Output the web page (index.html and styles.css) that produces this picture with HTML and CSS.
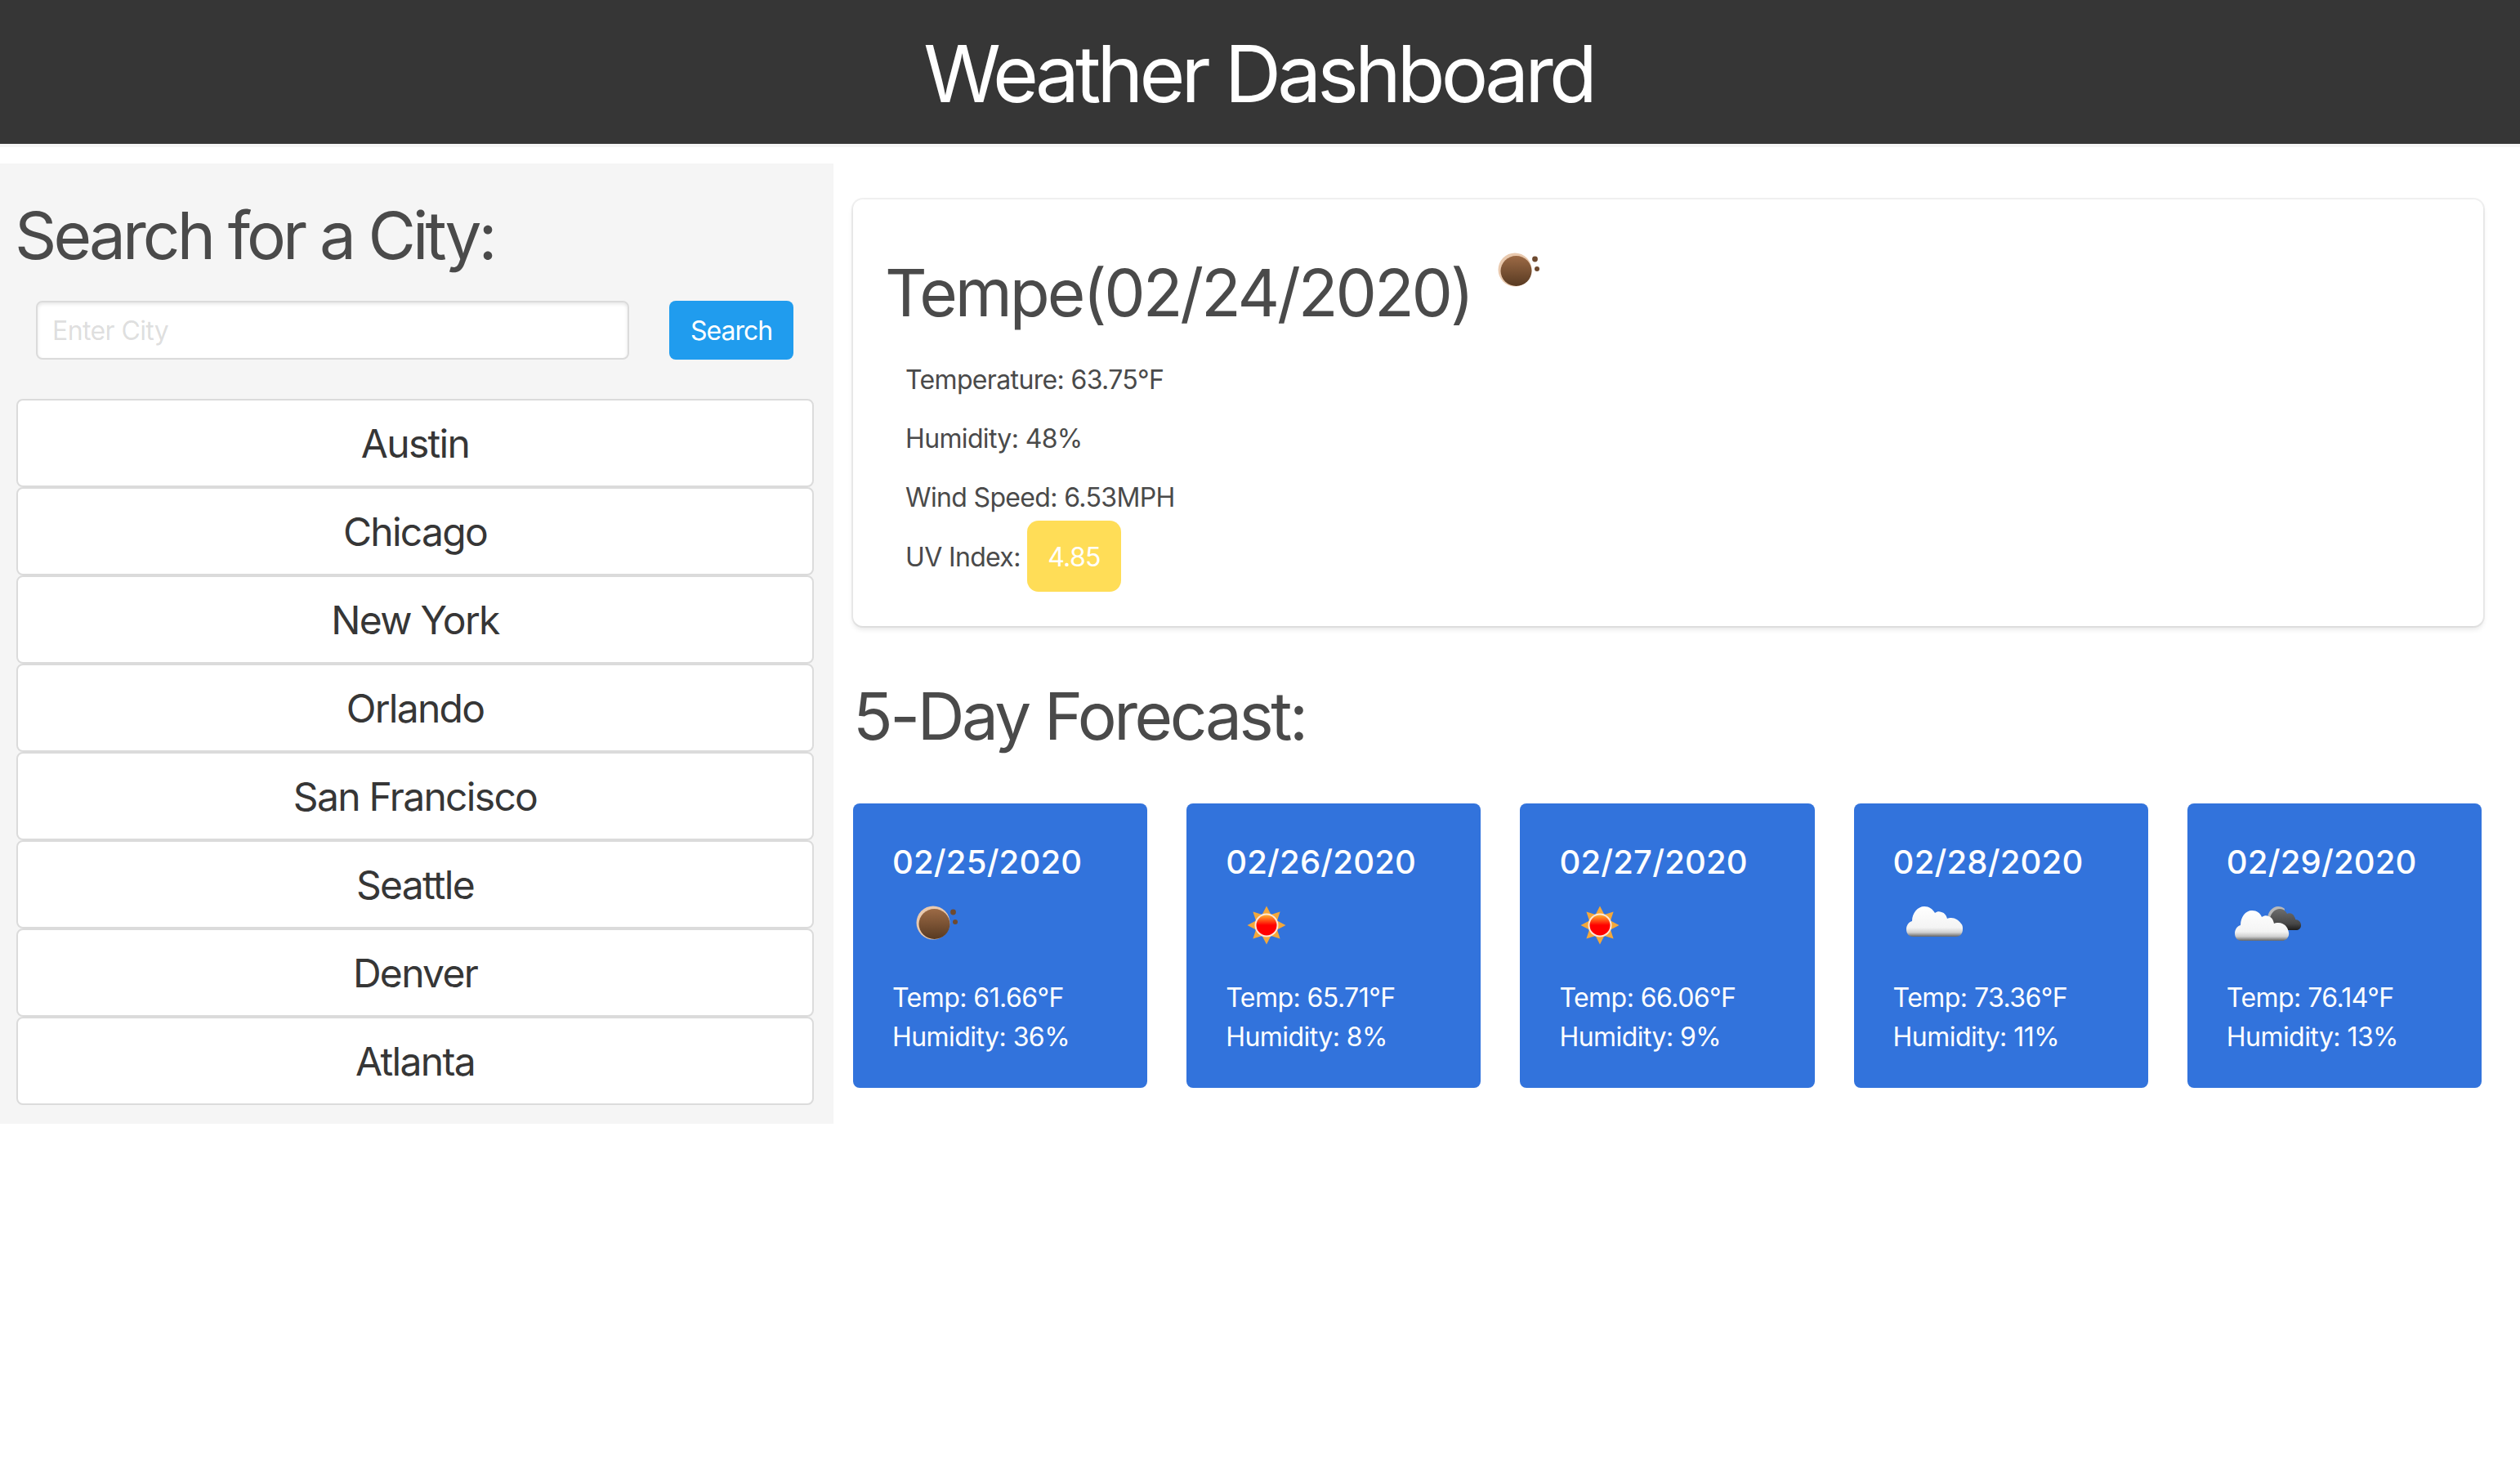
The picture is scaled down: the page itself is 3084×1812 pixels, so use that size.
FILE: index.html
```html
<!DOCTYPE html>
<html lang="en">
<head>
<meta charset="UTF-8" />
<meta name="viewport" content="width=device-width, initial-scale=1" />
<title>Weather Dashboard</title>
<link rel="stylesheet" href="styles.css">
</head>
<body>

<svg class="icon-defs" width="0" height="0" aria-hidden="true">
  <defs>
    <linearGradient id="moonFill" x1="0" y1="0" x2="0" y2="1">
      <stop offset="0" stop-color="#9c6a45" />
      <stop offset="1" stop-color="#583a22" />
    </linearGradient>
    <linearGradient id="sunFill" x1="0" y1="0" x2="0" y2="1">
      <stop offset="0" stop-color="#ffb030" />
      <stop offset="0.5" stop-color="#ff0000" />
      <stop offset="1" stop-color="#ff0000" />
    </linearGradient>
    <linearGradient id="cloudFill" x1="0" y1="0" x2="0" y2="1">
      <stop offset="0" stop-color="#ffffff" />
      <stop offset="0.7" stop-color="#f4f4f4" />
      <stop offset="0.86" stop-color="#d0d0d0" />
      <stop offset="1" stop-color="#666666" />
    </linearGradient>
    <linearGradient id="darkCloudFill" x1="0" y1="0" x2="0" y2="1">
      <stop offset="0" stop-color="#6e6e6e" />
      <stop offset="0.7" stop-color="#474747" />
      <stop offset="1" stop-color="#1c1c1c" />
    </linearGradient>

    <symbol id="icon-moon" viewBox="0 0 100 100">
      <circle cx="50" cy="50" r="20.5" fill="#e9c9ae" />
      <ellipse cx="51.5" cy="51.5" rx="19" ry="18.5" fill="url(#moonFill)" />
      <circle cx="74.5" cy="37" r="3.4" fill="#6e4a30" />
      <circle cx="77" cy="49" r="3" fill="#6e4a30" />
    </symbol>

    <symbol id="icon-sun" viewBox="0 0 100 100">
      <polygon fill="#f4a83a" points="50,29.5 55.4,40 66.6,36.4 63,47.6 73.5,53 63,58.4 66.6,69.6 55.4,66 50,76.5 44.6,66 33.4,69.6 37,58.4 26.5,53 37,47.6 33.4,36.4 44.6,40" />
      <circle cx="50" cy="53" r="14.5" fill="#ffe9d8" />
      <circle cx="50" cy="53" r="12.5" fill="url(#sunFill)" />
    </symbol>

    <symbol id="icon-cloud" viewBox="0 0 100 100">
      <path fill="url(#cloudFill)" d="M24 67c-5 0-8-4-8-9 0-5 3-9 7-10 0-10 7-18 15-18 6 0 10 3 13 8 3-2 5-2 8-1 4 1 6 4 7 8 1-1 3-1 5-1 5 0 9 3 12 7 2 2 2 4 2 7 0 5-3 9-8 9z" />
    </symbol>

    <symbol id="icon-clouds" viewBox="0 0 100 100">
      <path fill="#b9b9b9" d="M50 45c0-8 6-15 13-15 3 0 6 1 8 3l-6 22z" />
      <path fill="url(#darkCloudFill)" d="M56 59c-3-4-4-9-3-14 1-7 6-12 12-12 4 0 7 2 9 6 3-2 8 0 9 4 1 1 1 2 1 3 4 0 7 3 7 7 0 4-3 6-6 6z" />
      <path fill="url(#cloudFill)" d="M18 72c-5 0-8-4-8-9 0-5 3-9 7-10 0-10 6-18 14-18 6 0 10 3 12 8 3-2 6-2 8-1 4 1 6 4 7 9 1-1 3-1 5-1 7 0 12 5 13 12 1 5-3 10-8 10z" />
    </symbol>
  </defs>
</svg>

<header class="top-bar">
  <h1 class="top-title">Weather Dashboard</h1>
</header>

<main class="dashboard">
  <aside class="search-panel">
    <h2 class="panel-title">Search for a City:</h2>
    <form class="search-form">
      <input class="search-input" type="text" placeholder="Enter City" />
      <button class="search-button" type="button">Search</button>
    </form>
    <div class="city-list">
      <button class="city-button" type="button">Austin</button>
      <button class="city-button" type="button">Chicago</button>
      <button class="city-button" type="button">New York</button>
      <button class="city-button" type="button">Orlando</button>
      <button class="city-button" type="button">San Francisco</button>
      <button class="city-button" type="button">Seattle</button>
      <button class="city-button" type="button">Denver</button>
      <button class="city-button" type="button">Atlanta</button>
    </div>
  </aside>

  <section class="weather-column">
    <div class="current-box">
      <div class="current-head">
        <h2 class="current-title">Tempe(02/24/2020)</h2>
        <svg class="weather-icon"><use href="#icon-moon" /></svg>
      </div>
      <p class="current-line">Temperature: 63.75°F</p>
      <p class="current-line">Humidity: 48%</p>
      <p class="current-line">Wind Speed: 6.53MPH</p>
      <p class="current-line">UV Index: <span class="uv-badge">4.85</span></p>
    </div>

    <h2 class="forecast-title">5-Day Forecast:</h2>

    <div class="forecast-row">
      <div class="forecast-card">
        <h3 class="forecast-date">02/25/2020</h3>
        <svg class="weather-icon"><use href="#icon-moon" /></svg>
        <p class="forecast-text">Temp: 61.66°F</p>
        <p class="forecast-text">Humidity: 36%</p>
      </div>
      <div class="forecast-card">
        <h3 class="forecast-date">02/26/2020</h3>
        <svg class="weather-icon"><use href="#icon-sun" /></svg>
        <p class="forecast-text">Temp: 65.71°F</p>
        <p class="forecast-text">Humidity: 8%</p>
      </div>
      <div class="forecast-card">
        <h3 class="forecast-date">02/27/2020</h3>
        <svg class="weather-icon"><use href="#icon-sun" /></svg>
        <p class="forecast-text">Temp: 66.06°F</p>
        <p class="forecast-text">Humidity: 9%</p>
      </div>
      <div class="forecast-card">
        <h3 class="forecast-date">02/28/2020</h3>
        <svg class="weather-icon"><use href="#icon-cloud" /></svg>
        <p class="forecast-text">Temp: 73.36°F</p>
        <p class="forecast-text">Humidity: 11%</p>
      </div>
      <div class="forecast-card">
        <h3 class="forecast-date">02/29/2020</h3>
        <svg class="weather-icon"><use href="#icon-clouds" /></svg>
        <p class="forecast-text">Temp: 76.14°F</p>
        <p class="forecast-text">Humidity: 13%</p>
      </div>
    </div>
  </section>
</main>

</body>
</html>
```

FILE: styles.css
```css
* {
  box-sizing: border-box;
}
body {
  margin: 0;
  background: white;
  color: #4a4a4a;
  font-family: Inter, "Noto Sans", sans-serif;
  font-size: 32px;
  line-height: 48px;
}
h1, h2, h3, p {
  margin: 0;
  font-weight: 400;
}
.icon-defs {
  position: absolute;
}

.top-bar {
  height: 180px;
  background: #363636;
  border-bottom: 4px solid #f5f5f5;
  padding: 30px 4px 0 0;
  text-align: center;
}
.top-title {
  color: white;
  font-size: 96px;
  line-height: 120px;
  letter-spacing: -4.9px;
}

.dashboard {
  display: flex;
  margin-top: 20px;
}

.search-panel {
  width: 1020px;
  height: 1175px;
  background: #f5f5f5;
  padding: 40px 20px 0;
}
.panel-title {
  margin-left: -2px;
  font-size: 80px;
  line-height: 96px;
  letter-spacing: -3.9px;
}
.search-form {
  display: flex;
  gap: 49px;
  margin: 32px 24px 48px;
}
.search-input {
  width: 726px;
  height: 72px;
  border: 2px solid #dbdbdb;
  border-radius: 8px;
  box-shadow: inset 0 2px 4px rgba(10, 10, 10, 0.1);
  background: white;
  padding: 0 18px;
  font-family: inherit;
  font-size: 32px;
  letter-spacing: -0.6px;
}
.search-input::placeholder {
  color: rgba(54, 54, 54, 0.18);
}
.search-button {
  width: 152px;
  height: 72px;
  border: none;
  border-radius: 8px;
  background: #209cee;
  color: white;
  font-family: inherit;
  font-size: 32px;
  letter-spacing: -1px;
}
.city-list {
  display: flex;
  flex-direction: column;
  width: 976px;
}
.city-button {
  height: 108px;
  padding-top: 2px;
  border: 2px solid #dbdbdb;
  border-radius: 8px;
  background: white;
  color: #363636;
  font-family: inherit;
  font-size: 48px;
  letter-spacing: -1.7px;
}

.weather-column {
  width: 1995px;
  margin-left: 24px;
  padding-top: 44px;
}
.current-box {
  height: 522px;
  border-radius: 12px;
  box-shadow: 0 4px 6px rgba(10, 10, 10, 0.1), 0 0 0 2px rgba(10, 10, 10, 0.06);
  padding: 44px 42px;
}
.current-head {
  display: flex;
  align-items: flex-start;
  gap: 3px;
  height: 141px;
  margin-left: -3px;
}
.current-title {
  font-size: 80px;
  line-height: 96px;
  padding-top: 22px;
  letter-spacing: -3.1px;
}
.current-head .weather-icon {
  margin-top: -8px;
}
.current-line {
  margin-left: 22px;
  line-height: 72px;
  letter-spacing: -0.65px;
}
.uv-badge {
  display: inline-block;
  margin: -8px 0;
  padding: 21px 25px 18px;
  border-radius: 14px;
  background: #ffdd57;
  color: white;
  line-height: 48px;
}
.forecast-title {
  margin-top: 62px;
  font-size: 80px;
  line-height: 96px;
  letter-spacing: -3.4px;
}
.forecast-row {
  display: flex;
  gap: 48px;
  width: 1993px;
  margin-top: 59px;
}
.forecast-card {
  flex: 1;
  height: 348px;
  border-radius: 8px;
  background: #3273dc;
  color: white;
  padding: 48px;
}
.forecast-date {
  font-size: 40px;
  line-height: 48px;
  font-weight: 500;
  letter-spacing: 0.2px;
}
.weather-icon {
  display: block;
  width: 100px;
  height: 100px;
  flex: none;
  filter: blur(0.5px);
}
.forecast-text {
  line-height: 48px;
  letter-spacing: -0.55px;
}
.forecast-card .weather-icon {
  margin-bottom: 18px;
}
```
